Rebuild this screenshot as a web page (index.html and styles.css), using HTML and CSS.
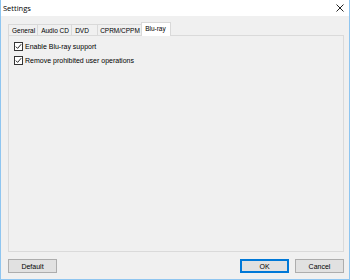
FILE: index.html
```html
<!DOCTYPE html>
<html lang="en">
<head>
    <meta charset="UTF-8">
    <title>Settings</title>
    <link rel="stylesheet" href="styles.css">
</head>
<body>
<div class="window">
    <div class="titlebar">
        <span class="title">Settings</span>
        <svg class="close" width="8" height="8" viewBox="0 0 8 8">
            <path d="M0.5 0.5 L7.5 7.5 M7.5 0.5 L0.5 7.5" stroke="#222" stroke-width="1"/>
        </svg>
    </div>
    <div class="content">
        <div class="tabs">
            <div class="tab tab-general">General</div>
            <div class="tab tab-audio">Audio CD</div>
            <div class="tab tab-dvd">DVD</div>
            <div class="tab tab-cprm">CPRM/CPPM</div>
            <div class="tab tab-bluray active">Blu-ray</div>
        </div>
        <div class="panel">
            <label class="check"><span class="box"><svg width="7" height="7" viewBox="0 0 7 7"><path d="M0.8 3.6 L2.6 5.4 L6.2 1.2" stroke="#222" stroke-width="1" fill="none"/></svg></span>Enable Blu-ray support</label>
            <label class="check"><span class="box"><svg width="7" height="7" viewBox="0 0 7 7"><path d="M0.8 3.6 L2.6 5.4 L6.2 1.2" stroke="#222" stroke-width="1" fill="none"/></svg></span>Remove prohibited user operations</label>
        </div>
        <div class="buttons">
            <button class="btn">Default</button>
            <span class="spacer"></span>
            <button class="btn focused">OK</button>
            <button class="btn">Cancel</button>
        </div>
    </div>
</div>
</body>
</html>
```

FILE: styles.css
```css
html, body{
    margin:0;
    padding:0;
    background:#f0f0f0;
}
.window{
    width:350px;
    height:280px;
    box-sizing:border-box;
    border:1px solid #8ec5f0;
    border-top:none;
    background:#f0f0f0;
    display:flex;
    flex-direction:column;
    font-family:"Liberation Sans", Arial, sans-serif;
    color:#000;
}
.titlebar{
    height:16px;
    background:#fff;
    display:flex;
    align-items:center;
    padding:0 5px 0 2px;
}
.title{
    font-family:"Open Sans", "Liberation Sans", sans-serif;
    font-size:7.5px;
    color:#000;
    flex:1;
}
.close{
    display:block;
    margin-top:-1px;
}
.content{
    padding:6px 5px 0 7px;
    display:flex;
    flex-direction:column;
}
.tabs{
    display:flex;
    align-items:flex-end;
    height:13px;
    font-size:6.5px;
}
.tab{
    box-sizing:border-box;
    height:11px;
    line-height:11px;
    padding:0 2px 0 3px;
    border:1px solid #d9d9d9;
    border-bottom:none;
    border-right:none;
    background:#f0f0f0;
    color:#000;
    white-space:nowrap;
}
.tab-general{ min-width:29px; }
.tab-audio{ min-width:34px; }
.tab-dvd{ min-width:26px; }
.tab-cprm{ min-width:44px; padding:0 1px 0 2px; }
.tab-bluray{ min-width:30px; }
.tab.active{
    height:14px;
    line-height:12px;
    background:#fff;
    border-right:1px solid #d9d9d9;
    margin-bottom:-1px;
    position:relative;
    z-index:1;
}
.panel{
    height:217px;
    box-sizing:border-box;
    border:1px solid #dadada;
    background:#f0f0f0;
    padding:6px 0 0 5px;
    display:flex;
    flex-direction:column;
    gap:5px;
}
.check{
    display:flex;
    align-items:center;
    font-size:7px;
    height:9px;
    color:#000;
}
.box{
    width:7px;
    height:7px;
    border:1px solid #333;
    background:#fff;
    margin-right:2px;
    display:flex;
}
.buttons{
    display:flex;
    margin-top:7px;
    gap:6px;
}
.spacer{
    flex:1;
}
.btn{
    width:49px;
    height:14px;
    padding:0;
    margin:0;
    border:1px solid #adadad;
    background:#e1e1e1;
    font-family:"Liberation Sans", Arial, sans-serif;
    font-size:7px;
    color:#000;
}
.btn.focused{
    border:1px solid #0078d7;
    box-shadow:inset 0 0 0 1px #0078d7;
}
```
